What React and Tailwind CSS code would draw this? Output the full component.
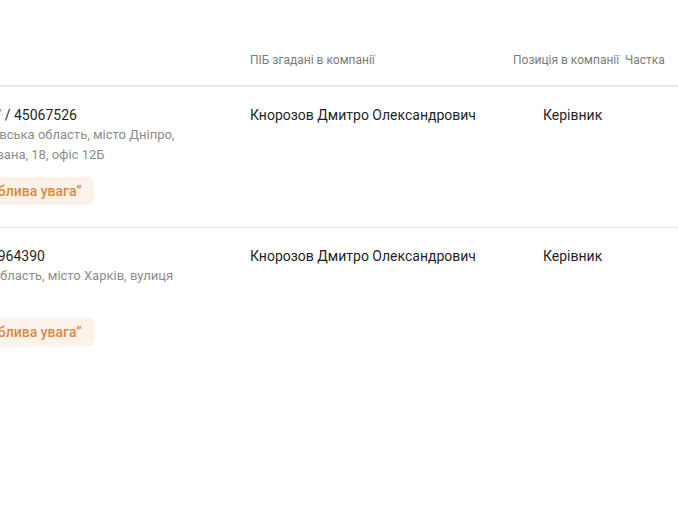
import React from "react";

const rows = [
  {
    name: "ТОВ “ДНІПРОБУД”",
    code: "45067526",
    address: ["49000, Дніпропетровська область, місто Дніпро,", "вулиця Академіка Івана, 18, офіс 12Б"],
    person: "Кнорозов Дмитро Олександрович",
    role: "Керівник",
  },
  {
    name: "ТОВ “ХАРКІВ”",
    code: "44964390",
    address: ["61000, Харківська область, місто Харків, вулиця", "Сумська, 10"],
    person: "Кнорозов Дмитро Олександрович",
    role: "Керівник",
  },
];

const App = () => {
  return (
    <div className="w-[678px] h-[509px] overflow-hidden bg-white font-['Roboto',sans-serif]">
      {/* Header */}
      <div className="grid grid-cols-[250px_263px_112px_1fr] pt-[53px] pb-[18px] border-b-2 border-[#e7e7e7] text-[12px] leading-[14px] text-[#7b7b7b]">
        <div />
        <div>ПІБ згадані в компанії</div>
        <div>Позиція в компанії</div>
        <div>Частка</div>
      </div>

      {rows.map((row, i) => (
        <div
          key={i}
          className={`grid grid-cols-[250px_263px_112px_1fr] pt-[18px] pb-[22px] ${
            i < rows.length - 1 ? "border-b border-[#ececec]" : ""
          }`}
        >
          <div className="-ml-[119px] whitespace-nowrap">
            <div className="text-[14px] leading-5 text-[#1f1f1f]">
              <span className="text-[#4a90e2]">{row.name}</span> / {row.code}
            </div>
            <div className="-ml-[2px] text-[13px] leading-5 text-[#8c8c8c]">
              {row.address.map((line, j) => (
                <div key={j}>{line}</div>
              ))}
            </div>
            <div className="ml-[9px] mt-3 inline-flex h-7 items-center rounded-md bg-[#fcf2e9] px-3 text-[14px] font-medium text-[#d9893d]">
              Компанія “Особлива увага”
            </div>
          </div>
          <div className="text-[14px] leading-5 text-[#1f1f1f]">{row.person}</div>
          <div className="pl-[30px] text-[14px] leading-5 text-[#1f1f1f]">{row.role}</div>
          <div />
        </div>
      ))}
    </div>
  );
};

export default App;
